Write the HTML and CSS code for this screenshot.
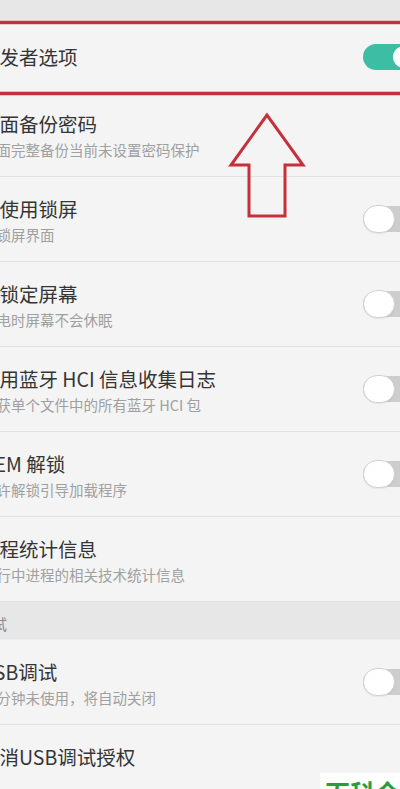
FILE: index.html
```html
<!DOCTYPE html>
<html lang="zh-CN">
<head>
<meta charset="utf-8">
<title>开发者选项</title>
<link rel="stylesheet" href="styles.css">
</head>
<body>
<div class="screen">
  <div class="cat cat-top"></div>

  <div class="row single">
    <div class="text"><div class="title">开发者选项</div></div>
    <span class="switch on"><span class="knob"></span></span>
  </div>

  <div class="row">
    <div class="text">
      <div class="title">桌面备份密码</div>
      <div class="sub">桌面完整备份当前未设置密码保护</div>
    </div>
  </div>

  <div class="row">
    <div class="text">
      <div class="title">不使用锁屏</div>
      <div class="sub">无锁屏界面</div>
    </div>
    <span class="switch"><span class="knob"></span></span>
  </div>

  <div class="row">
    <div class="text">
      <div class="title">不锁定屏幕</div>
      <div class="sub">充电时屏幕不会休眠</div>
    </div>
    <span class="switch"><span class="knob"></span></span>
  </div>

  <div class="row">
    <div class="text">
      <div class="title">启用蓝牙 HCI 信息收集日志</div>
      <div class="sub">捕获单个文件中的所有蓝牙 HCI 包</div>
    </div>
    <span class="switch"><span class="knob"></span></span>
  </div>

  <div class="row">
    <div class="text">
      <div class="title">OEM 解锁</div>
      <div class="sub">允许解锁引导加载程序</div>
    </div>
    <span class="switch"><span class="knob"></span></span>
  </div>

  <div class="row">
    <div class="text">
      <div class="title">进程统计信息</div>
      <div class="sub">运行中进程的相关技术统计信息</div>
    </div>
  </div>

  <div class="cat cat-label"><span>调试</span></div>

  <div class="row">
    <div class="text">
      <div class="title">USB调试</div>
      <div class="sub">若分钟未使用，将自动关闭</div>
    </div>
    <span class="switch"><span class="knob"></span></span>
  </div>

  <div class="row top">
    <div class="text">
      <div class="title">撤消USB调试授权</div>
    </div>
  </div>

  <div class="mark-box"></div>

  <svg class="arrow" viewBox="0 0 82 112" width="82" height="112">
    <polygon points="41,5 5,55 23,55 23,106 59,106 59,55 77,55" fill="none" stroke="#c4303b" stroke-width="3" stroke-linejoin="miter"/>
  </svg>

  <div class="watermark"><span>百科全书</span></div>
</div>
</body>
</html>
```

FILE: styles.css
```css
* { box-sizing: border-box; }

html, body {
  margin: 0;
  padding: 0;
  height: 789px;
  overflow: hidden;
}

body {
  font-family: "Noto Sans CJK SC", "Noto Sans", sans-serif;
  background: #f4f4f4;
}

.screen {
  position: relative;
  width: 400px;
  height: 789px;
  overflow: hidden;
  background: #f4f4f4;
}

.cat {
  background: #e7e7e7;
}

.cat-top {
  height: 22px;
}

.cat-label {
  height: 38px;
  display: flex;
  align-items: center;
  padding-top: 6px;
  border-bottom: 1px solid #eeeeee;
}

.cat-label span {
  margin-left: -23px;
  font-size: 15px;
  line-height: 20px;
  color: #8c8c8c;
}

.row {
  display: flex;
  align-items: center;
  height: 85px;
  border-bottom: 1px solid #e2e2e2;
}

.row.single {
  height: 70px;
}

.text {
  flex: 1;
  min-width: 0;
  margin-left: -20px;
  padding-top: 5px;
}

.row.single .text {
  padding-top: 0;
}

.row.top .text {
  align-self: flex-start;
  padding-top: 19px;
}

.title {
  font-size: 19.5px;
  line-height: 26px;
  color: #353535;
  white-space: nowrap;
}

.sub {
  margin-left: 2px;
  font-size: 14.5px;
  line-height: 26px;
  color: #a0a0a0;
  white-space: nowrap;
}

.switch {
  position: relative;
  flex: none;
  width: 60px;
  height: 26px;
  margin-right: -23px;
  border-radius: 13px;
  background: #cdcdcd;
}

.switch .knob {
  position: absolute;
  left: 0;
  top: -1px;
  width: 32px;
  height: 28px;
  border-radius: 14px;
  background: #ffffff;
  border: 1px solid #d2d2d2;
  box-shadow: 0 1px 1px rgba(0, 0, 0, 0.06);
}

.switch.on {
  background: #3dbea4;
}

.switch.on .knob {
  left: auto;
  right: 0;
  top: 0;
  height: 26px;
  border: 2px solid #3dbea4;
  box-shadow: none;
}

.mark-box {
  position: absolute;
  top: 21px;
  left: -10px;
  right: -10px;
  height: 74px;
  border: 3px solid #c4303b;
  box-shadow: 0 0 0 1px rgba(235, 160, 160, 0.55), inset 0 0 0 1px rgba(235, 160, 160, 0.55);
}

.arrow {
  position: absolute;
  left: 226px;
  top: 110px;
}

.watermark {
  position: absolute;
  left: 320px;
  top: 773px;
  width: 80px;
  height: 16px;
  background: #ffffff;
  overflow: hidden;
  padding: 7px 0 0 5px;
}

.watermark span {
  display: block;
  font-size: 25px;
  line-height: 25px;
  font-weight: 700;
  color: #23a03a;
  white-space: nowrap;
}
```
